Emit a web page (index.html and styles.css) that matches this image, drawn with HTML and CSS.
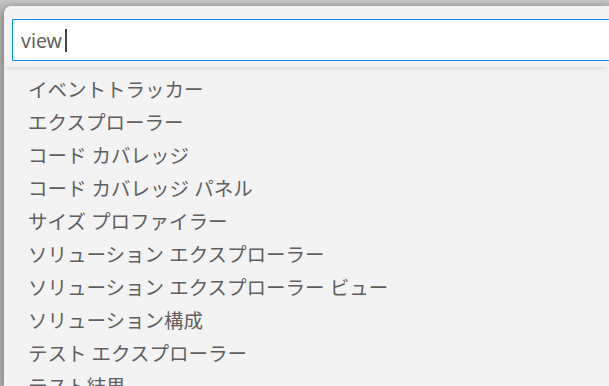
FILE: index.html
```html
<!DOCTYPE html>
<html lang="ja">
<head>
  <meta charset="UTF-8" />
  <title>Quick Open</title>
  <link rel="stylesheet" href="styles.css">
</head>
<body>
  <div class="backdrop">
    <!-- Quick pick widget -->
    <div class="quick-pick">
      <div class="input-row">
        <div class="input-box">
          <span class="query">view</span><span class="caret"></span>
        </div>
      </div>
      <ul class="results">
        <li>イベントトラッカー</li>
        <li>エクスプローラー</li>
        <li>コード カバレッジ</li>
        <li>コード カバレッジ パネル</li>
        <li>サイズ プロファイラー</li>
        <li>ソリューション エクスプローラー</li>
        <li>ソリューション エクスプローラー ビュー</li>
        <li>ソリューション構成</li>
        <li>テスト エクスプローラー</li>
        <li>テスト結果</li>
      </ul>
    </div>
  </div>
</body>
</html>
```

FILE: styles.css
```css
html, body {
  margin: 0;
  padding: 0;
  height: 100%;
  overflow: hidden;
}
body {
  font-family: "Noto Sans", "Noto Sans CJK JP", sans-serif;
  background: linear-gradient(to bottom, #c4c4c4 0px, #a9a9a9 20px, #a9a9a9 100%);
}
.backdrop {
  padding: 6px 0 0 4px;
  height: 100%;
  box-sizing: border-box;
}
/* Quick pick panel */
.quick-pick {
  background: #f3f3f3;
  border-radius: 7px 0 0 0;
  height: 100%;
  box-shadow: 0 0 6px rgba(0, 0, 0, 0.25);
}
.input-row {
  padding: 13px 0 6px 8px;
  box-shadow: 0 3px 5px -2px rgba(0, 0, 0, 0.12);
  position: relative;
}
.input-box {
  height: 40px;
  background: #fff;
  border: 1px solid #0090f1;
  border-right: none;
  border-radius: 2px 0 0 2px;
  display: flex;
  align-items: center;
  padding-left: 8px;
}
.query {
  font-size: 19.5px;
  color: #616161;
}
.caret {
  display: inline-block;
  width: 2px;
  height: 23px;
  background: #444;
  margin-left: 3px;
}
/* Result list */
.results {
  list-style: none;
  margin: 0;
  padding: 6px 0 0 24px;
}
.results li {
  height: 33px;
  line-height: 33px;
  font-size: 19.5px;
  color: #5f5f5f;
  white-space: nowrap;
}
```
